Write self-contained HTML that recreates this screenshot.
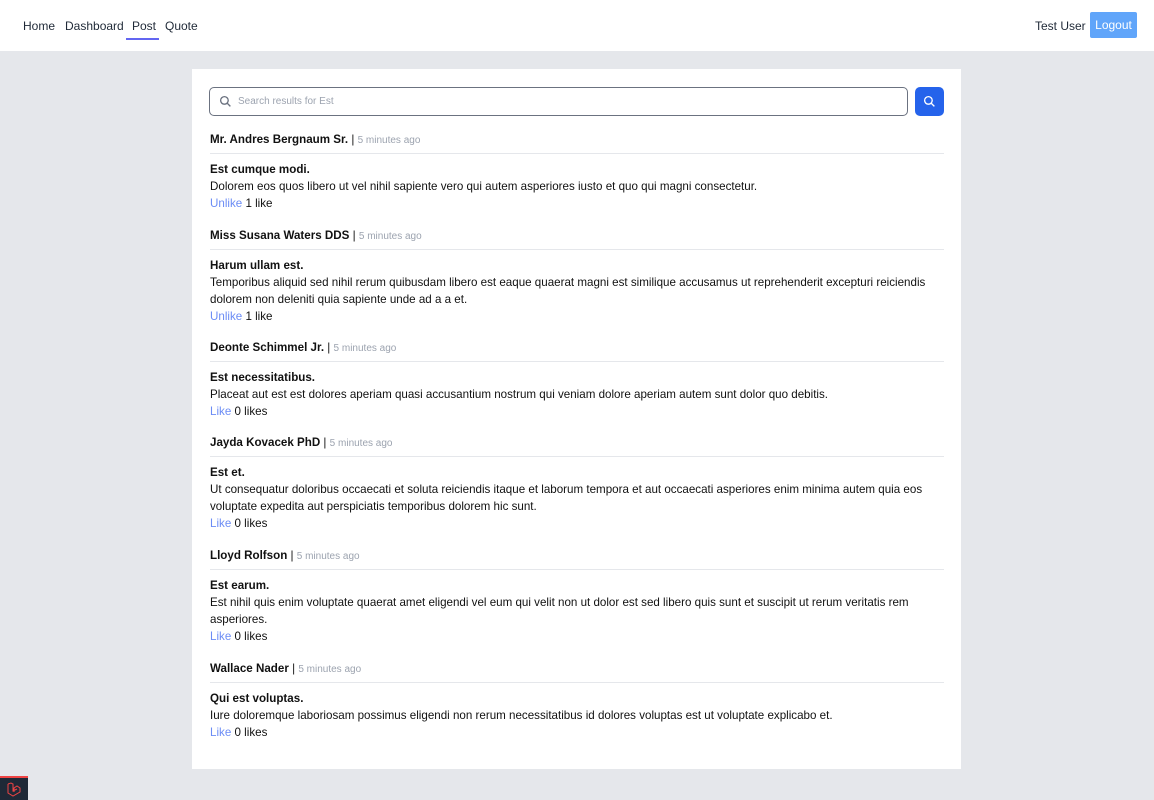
<!DOCTYPE html>
<html><head><meta charset="utf-8"><style>
*{box-sizing:border-box;margin:0;padding:0}
body{width:1154px;height:800px;background:#e5e7eb;font-family:"Liberation Sans",sans-serif;color:#111;position:relative;overflow:hidden}
nav{height:51px;background:#fff;position:relative}
.nl{position:absolute;top:19px;font-size:12px;color:#1f2937}
.ul{position:absolute;left:126px;top:38px;width:33px;height:2px;background:#6366f1}
.logout{position:absolute;left:1090px;top:12px;width:47px;height:26px;background:#60a5fa;color:#fff;font-size:12px;line-height:26px;text-align:center;border-radius:2px}
.card{position:absolute;left:192px;top:69px;width:769px;height:700px;background:#fff;padding:18px 17px}
.search{position:absolute;left:17px;top:18px;width:699px;height:29px;border:1px solid #6b7280;border-radius:5px}
.search span{position:absolute;left:28px;top:8px;font-size:10px;color:#9ca3af}
.sbtn{position:absolute;left:723px;top:18px;width:29px;height:29px;background:#2563eb;border-radius:5px}
.posts{position:absolute;left:18px;top:62px;width:734px;font-size:11.6px;line-height:17px}
.a{font-weight:bold;height:23px;padding-bottom:5px;border-bottom:1px solid #e5e7eb;margin-bottom:7px;overflow:hidden}
.a span{font-weight:normal}
.a small{font-weight:normal;font-size:10px;color:#9ca3af;line-height:1}
.t{font-weight:bold;height:17px}
.l{margin-bottom:15px}
.l a{color:#6b8cf5;text-decoration:none}
.lar{position:absolute;left:0;top:776px;width:28px;height:24px;background:#1f2937;border-top:2px solid #ef4444}
</style></head><body>
<nav>
<div class="nl" style="left:23px">Home</div>
<div class="nl" style="left:65px">Dashboard</div>
<div class="nl" style="left:132px">Post</div>
<div class="nl" style="left:165px">Quote</div>
<div class="ul"></div>
<div class="nl" style="left:1035px">Test User</div>
<div class="logout">Logout</div>
</nav>
<div class="card">
<div class="search"><svg style="position:absolute;left:9px;top:7px" width="13" height="13" viewBox="0 0 24 24" fill="none" stroke="#6b7280" stroke-width="2.5"><circle cx="10" cy="10" r="7"/><path d="M15 15l6 6"/></svg><span>Search results for Est</span></div>
<div class="sbtn"><svg style="position:absolute;left:8px;top:8px" width="13" height="13" viewBox="0 0 24 24" fill="none" stroke="#fff" stroke-width="2.5"><circle cx="10" cy="10" r="7"/><path d="M15 15l6 6"/></svg></div>
<div class="posts">
<div class="a">Mr. Andres Bergnaum Sr. <span>|</span> <small>5 minutes ago</small></div>
<div class="t">Est cumque modi.</div>
<div>Dolorem eos quos libero ut vel nihil sapiente vero qui autem asperiores iusto et quo qui magni consectetur.</div>
<div class="l"><a>Unlike</a> 1 like</div>
<div class="a">Miss Susana Waters DDS <span>|</span> <small>5 minutes ago</small></div>
<div class="t">Harum ullam est.</div>
<div>Temporibus aliquid sed nihil rerum quibusdam libero est eaque quaerat magni est similique accusamus ut reprehenderit excepturi reiciendis dolorem non deleniti quia sapiente unde ad a a et.</div>
<div class="l" style="margin-bottom:14px"><a>Unlike</a> 1 like</div>
<div class="a">Deonte Schimmel Jr. <span>|</span> <small>5 minutes ago</small></div>
<div class="t">Est necessitatibus.</div>
<div>Placeat aut est est dolores aperiam quasi accusantium nostrum qui veniam dolore aperiam autem sunt dolor quo debitis.</div>
<div class="l" style="margin-bottom:14px"><a>Like</a> 0 likes</div>
<div class="a">Jayda Kovacek PhD <span>|</span> <small>5 minutes ago</small></div>
<div class="t">Est et.</div>
<div>Ut consequatur doloribus occaecati et soluta reiciendis itaque et laborum tempora et aut occaecati asperiores enim minima autem quia eos voluptate expedita aut perspiciatis temporibus dolorem hic sunt.</div>
<div class="l"><a>Like</a> 0 likes</div>
<div class="a">Lloyd Rolfson <span>|</span> <small>5 minutes ago</small></div>
<div class="t">Est earum.</div>
<div>Est nihil quis enim voluptate quaerat amet eligendi vel eum qui velit non ut dolor est sed libero quis sunt et suscipit ut rerum veritatis rem asperiores.</div>
<div class="l"><a>Like</a> 0 likes</div>
<div class="a">Wallace Nader <span>|</span> <small>5 minutes ago</small></div>
<div class="t">Qui est voluptas.</div>
<div>Iure doloremque laboriosam possimus eligendi non rerum necessitatibus id dolores voluptas est ut voluptate explicabo et.</div>
<div class="l"><a>Like</a> 0 likes</div>
</div>
</div>
<div class="lar"><svg style="position:absolute;left:6px;top:4px" width="16" height="15" viewBox="0 0 16 15" fill="none" stroke="#ef4444" stroke-width="1"><path d="M2 2v9l5 3 7-4V6l-3-2-3 2v4M2 2l3-1 2 1v7l4-2"/></svg></div>
</body></html>
